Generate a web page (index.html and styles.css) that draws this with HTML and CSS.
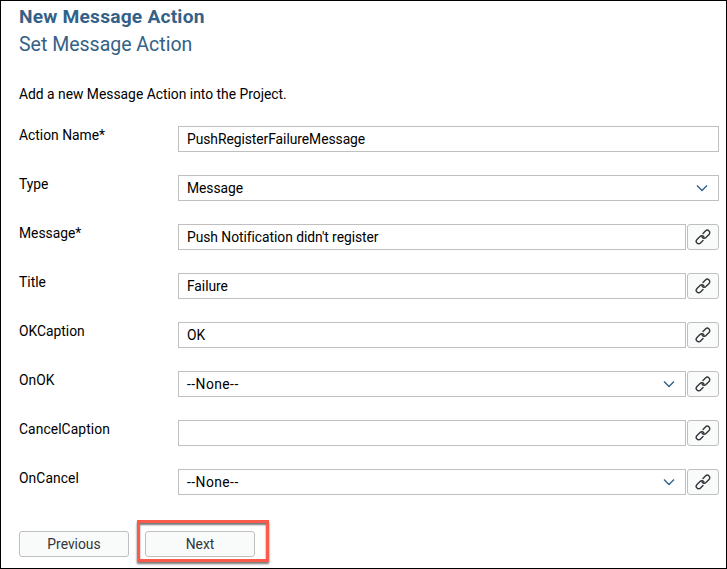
FILE: index.html
```
<!DOCTYPE html>
<html lang="en">
<head>
<meta charset="utf-8">
<title>New Message Action</title>
<link rel="stylesheet" href="styles.css">
</head>
<body>
<svg width="0" height="0" class="defs" aria-hidden="true">
  <symbol id="link" viewBox="0 0 16 16">
    <g fill="none" stroke="#32363a" stroke-width="1.4" stroke-linecap="round" stroke-linejoin="round" transform="rotate(-45 8 8)">
      <path d="M5.500 10.500H2a2.500 2.500 0 0 1 0-5h4.300a2.500 2.500 0 0 1 2.300 3.300"/>
      <path d="M10.500 5.500H14a2.500 2.500 0 0 1 0 5H9.700a2.500 2.500 0 0 1-2.300-3.300"/>
    </g>
  </symbol>
  <symbol id="chevron" viewBox="0 0 12 8">
    <path d="M1 1.500l5 5 5-5" fill="none" stroke="#346187" stroke-width="1.400"/>
  </symbol>
</svg>
<main class="dialog">
  <h1 class="title">New Message Action</h1>
  <h2 class="subtitle">Set Message Action</h2>
  <p class="intro">Add a new Message Action into the Project.</p>
  <form class="form">
    <div class="row"><span class="label">Action Name*</span><div class="field"><span>PushRegisterFailureMessage</span></div></div>
    <div class="row"><span class="label">Type</span><div class="field"><span>Message</span><svg class="chevron"><use href="#chevron"/></svg></div></div>
    <div class="row"><span class="label">Message*</span><div class="field"><span>Push Notification didn't register</span></div><button type="button" class="link"><svg><use href="#link"/></svg></button></div>
    <div class="row"><span class="label">Title</span><div class="field"><span>Failure</span></div><button type="button" class="link"><svg><use href="#link"/></svg></button></div>
    <div class="row"><span class="label">OKCaption</span><div class="field"><span>OK</span></div><button type="button" class="link"><svg><use href="#link"/></svg></button></div>
    <div class="row"><span class="label">OnOK</span><div class="field"><span class="none">--None--</span><svg class="chevron"><use href="#chevron"/></svg></div><button type="button" class="link"><svg><use href="#link"/></svg></button></div>
    <div class="row"><span class="label wide">CancelCaption</span><div class="field"></div><button type="button" class="link"><svg><use href="#link"/></svg></button></div>
    <div class="row"><span class="label wide">OnCancel</span><div class="field"><span class="none">--None--</span><svg class="chevron"><use href="#chevron"/></svg></div><button type="button" class="link"><svg><use href="#link"/></svg></button></div>
  </form>
  <div class="actions">
    <button type="button" class="btn">Previous</button>
    <div class="highlight"><button type="button" class="btn">Next</button></div>
  </div>
</main>
</body>
</html>
```
FILE: styles.css
```
* { box-sizing: border-box; }
body { margin: 0; background: #fff; color: #000; font: 13.850px/20px Roboto, "Liberation Sans", sans-serif; }
.defs { position: absolute; }
.dialog { width: 727px; height: 569px; border: 1px solid #000; padding: 2px 7px 0 18px; overflow: hidden; }
h1, h2, p { margin: 0; white-space: nowrap; }
.title { font-size: 19.200px; line-height: 28px; font-weight: 700; letter-spacing: 0.200px; color: #346187; }
.subtitle { font-size: 19.500px; line-height: 28px; font-weight: 400; color: #346187; }
.intro { margin-top: 25px; }
.form { margin-top: 22px; display: grid; gap: 23px; }
.row { display: flex; height: 26px; }
.label { width: 159px; flex: none; line-height: 19px; }
.label.wide { letter-spacing: 0.080px; }
.field { flex: 1; border: 1px solid #bfbfbf; padding: 0 10px 0 8px; display: flex; align-items: center; justify-content: space-between; white-space: nowrap; letter-spacing: -0.050px; }
.none { letter-spacing: 0.450px; }
.chevron { width: 12px; height: 8px; }
.link { width: 32px; margin-left: 1px; padding: 0; border: 1px solid #bfbfbf; border-radius: 3px; background: #f9fafa; display: grid; place-items: center; }
.link svg { width: 16px; height: 16px; }
.actions { display: flex; margin-top: 25px; align-items: flex-start; }
.btn { width: 110px; height: 26px; padding: 0; border: 1px solid #bfbfbf; border-radius: 3px; background: #f9fafa; color: #32363a; font: 13.850px Roboto, "Liberation Sans", sans-serif; }
.actions > .btn { margin-top: 11px; }
.highlight { width: 132px; height: 42px; margin-left: 8px; border: 3px solid #fa5b4b; padding: 8px 0 0 5px; box-shadow: 0 2px 2px #777, inset 0 2px 2px #777; }
.highlight .btn { display: block; }
```
